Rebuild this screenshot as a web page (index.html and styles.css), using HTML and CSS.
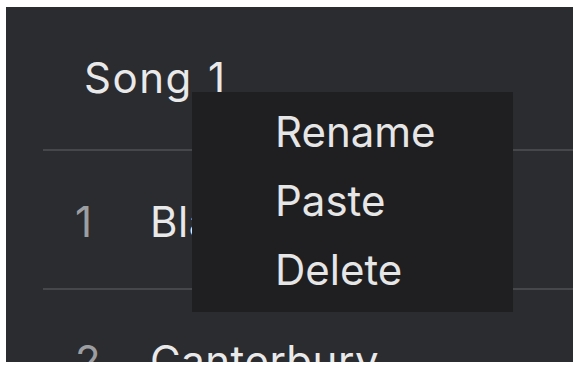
FILE: index.html
```html
<!DOCTYPE html>
<html lang="en">
<head>
<meta charset="utf-8">
<title>Song list</title>
<link rel="stylesheet" href="styles.css">
</head>
<body>
<div class="panel">
  <div class="header">Song 1</div>
  <div class="list">
    <div class="row"><span class="num">1</span><span class="title">Blackbird</span></div>
    <div class="row"><span class="num">2</span><span class="title">Canterbury</span></div>
  </div>
  <div class="menu">
    <div class="item">Rename</div>
    <div class="item">Paste</div>
    <div class="item">Delete</div>
  </div>
</div>
</body>
</html>
```
FILE: styles.css
```css
html, body {
  margin: 0;
  padding: 0;
  background: #ffffff;
}
body {
  font-family: Inter, "Noto Sans", sans-serif;
  font-size: 42px;
  width: 578px;
  height: 368px;
  overflow: hidden;
}
.panel {
  position: relative;
  margin: 7px 0 0 6px;
  width: 567px;
  height: 355px;
  background: #2b2c30;
  overflow: hidden;
}
.header {
  padding: 46px 0 46px 78px;
  line-height: 50px;
  letter-spacing: 1.5px;
  word-spacing: 2px;
  color: #e9e9ea;
}
.list {
  margin-left: 37px;
}
.row {
  display: flex;
  border-top: 2px solid #46474b;
  padding: 46px 0 41px;
  line-height: 50px;
}
.num {
  width: 107px;
  padding-left: 32px;
  box-sizing: border-box;
  color: #9d9ea1;
}
.title {
  color: #e9e9ea;
  white-space: nowrap;
  letter-spacing: 0.5px;
}
.menu {
  position: absolute;
  left: 186px;
  top: 85px;
  width: 321px;
  height: 220px;
  box-sizing: border-box;
  padding: 5px 0 8px 83px;
  background: #1f1f21;
}
.item {
  line-height: 69px;
  color: #e6e6e7;
}
```
